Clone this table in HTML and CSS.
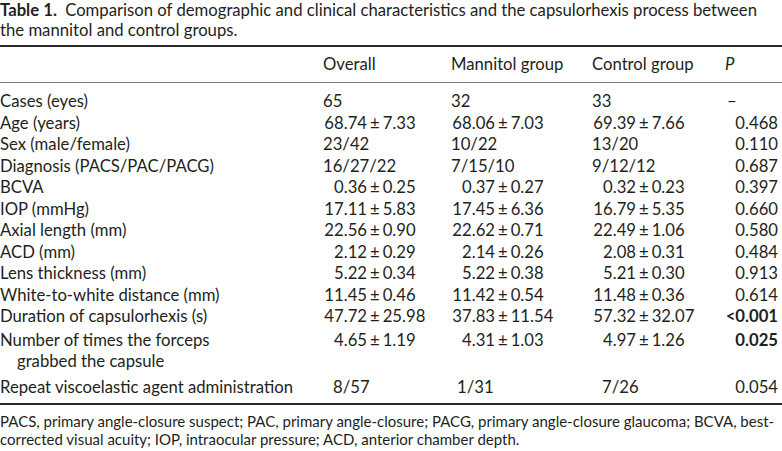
FILE: index.html
```html
<!DOCTYPE html>
<html>
<head>
<meta charset="utf-8">
<link rel="stylesheet" href="styles.css">
</head>
<body>
<div class="page">
  <p class="caption"><b class="lbl">Table 1.</b> Comparison of demographic and clinical characteristics and the capsulorhexis process between the mannitol and control groups.</p>
  <table class="tbl">
    <colgroup>
      <col class="c-label">
      <col class="c-all">
      <col class="c-man">
      <col class="c-con">
      <col class="c-p">
    </colgroup>
    <thead>
      <tr>
        <th></th>
        <th>Overall</th>
        <th>Mannitol group</th>
        <th>Control group</th>
        <th><i>P</i></th>
      </tr>
    </thead>
    <tbody>
      <tr class="first">
        <td>Cases (eyes)</td><td>65</td><td>32</td><td>33</td><td class="dash">–</td>
      </tr>
      <tr>
        <td>Age (years)</td>
        <td><span class="l">68.74</span><span class="pm">±</span><span class="r">7.33</span></td>
        <td><span class="l">68.06</span><span class="pm">±</span><span class="r">7.03</span></td>
        <td><span class="l">69.39</span><span class="pm">±</span><span class="r">7.66</span></td>
        <td class="p">0.468</td>
      </tr>
      <tr>
        <td>Sex (male/female)</td><td>23/42</td><td>10/22</td><td>13/20</td><td class="p">0.110</td>
      </tr>
      <tr>
        <td>Diagnosis (PACS/PAC/PACG)</td><td>16/27/22</td><td>7/15/10</td><td>9/12/12</td><td class="p">0.687</td>
      </tr>
      <tr>
        <td>BCVA</td>
        <td><span class="l">0.36</span><span class="pm">±</span><span class="r">0.25</span></td>
        <td><span class="l">0.37</span><span class="pm">±</span><span class="r">0.27</span></td>
        <td><span class="l">0.32</span><span class="pm">±</span><span class="r">0.23</span></td>
        <td class="p">0.397</td>
      </tr>
      <tr>
        <td>IOP (mmHg)</td>
        <td><span class="l">17.11</span><span class="pm">±</span><span class="r">5.83</span></td>
        <td><span class="l">17.45</span><span class="pm">±</span><span class="r">6.36</span></td>
        <td><span class="l">16.79</span><span class="pm">±</span><span class="r">5.35</span></td>
        <td class="p">0.660</td>
      </tr>
      <tr>
        <td>Axial length (mm)</td>
        <td><span class="l">22.56</span><span class="pm">±</span><span class="r">0.90</span></td>
        <td><span class="l">22.62</span><span class="pm">±</span><span class="r">0.71</span></td>
        <td><span class="l">22.49</span><span class="pm">±</span><span class="r">1.06</span></td>
        <td class="p">0.580</td>
      </tr>
      <tr>
        <td>ACD (mm)</td>
        <td><span class="l">2.12</span><span class="pm">±</span><span class="r">0.29</span></td>
        <td><span class="l">2.14</span><span class="pm">±</span><span class="r">0.26</span></td>
        <td><span class="l">2.08</span><span class="pm">±</span><span class="r">0.31</span></td>
        <td class="p">0.484</td>
      </tr>
      <tr>
        <td>Lens thickness (mm)</td>
        <td><span class="l">5.22</span><span class="pm">±</span><span class="r">0.34</span></td>
        <td><span class="l">5.22</span><span class="pm">±</span><span class="r">0.38</span></td>
        <td><span class="l">5.21</span><span class="pm">±</span><span class="r">0.30</span></td>
        <td class="p">0.913</td>
      </tr>
      <tr>
        <td>White-to-white distance (mm)</td>
        <td><span class="l">11.45</span><span class="pm">±</span><span class="r">0.46</span></td>
        <td><span class="l">11.42</span><span class="pm">±</span><span class="r">0.54</span></td>
        <td><span class="l">11.48</span><span class="pm">±</span><span class="r">0.36</span></td>
        <td class="p">0.614</td>
      </tr>
      <tr>
        <td>Duration of capsulorhexis (s)</td>
        <td><span class="l">47.72</span><span class="pm">±</span><span class="r">25.98</span></td>
        <td><span class="l">37.83</span><span class="pm">±</span><span class="r">11.54</span></td>
        <td><span class="l">57.32</span><span class="pm">±</span><span class="r">32.07</span></td>
        <td class="p"><b>&lt;0.001</b></td>
      </tr>
      <tr class="two">
        <td>Number of times the forceps<br><span class="indent">grabbed the capsule</span></td>
        <td><span class="l">4.65</span><span class="pm">±</span><span class="r">1.19</span></td>
        <td><span class="l">4.31</span><span class="pm">±</span><span class="r">1.03</span></td>
        <td><span class="l">4.97</span><span class="pm">±</span><span class="r">1.26</span></td>
        <td class="p"><b>0.025</b></td>
      </tr>
      <tr class="last">
        <td>Repeat viscoelastic agent administration</td>
        <td class="shift">8/57</td><td class="shift s2">1/31</td><td class="shift">7/26</td><td class="p">0.054</td>
      </tr>
    </tbody>
  </table>
  <p class="foot">PACS, primary angle-closure suspect; PAC, primary angle-closure; PACG, primary angle-closure glaucoma; BCVA, best-corrected visual acuity; IOP, intraocular pressure; ACD, anterior chamber depth.</p>
</div>
</body>
</html>
```

FILE: styles.css
```css
html, body {
  margin: 0;
  padding: 0;
  background: #ffffff;
}
body {
  font-family: Lato, "Liberation Sans", sans-serif;
  color: #231f20;
  font-size: 16.7px;
}
.page {
  width: 782px;
}
.caption {
  margin: 0;
  font-size: 16.7px;
  line-height: 20px;
}
.caption .lbl {
  font-weight: 700;
  margin-right: 4px;
}
.tbl {
  width: 782px;
  table-layout: fixed;
  border-collapse: collapse;
  margin-top: 5px;
  font-size: 16.7px;
}
.c-label { width: 323px; }
.c-all { width: 128px; }
.c-man { width: 141px; }
.c-con { width: 133px; }
.c-p { width: 57px; }
.tbl th {
  font-weight: 400;
  text-align: left;
  padding: 8px 0 8px 0;
  line-height: 19px;
  border-top: 2px solid #2b2b2b;
  border-bottom: 1px solid #7a7a7a;
  white-space: nowrap;
}
.tbl td {
  padding: 0;
  line-height: 21.5px;
  vertical-align: top;
  white-space: nowrap;
}
.tbl tr.first td {
  padding-top: 8px;
}
.tbl tr.two td {
  padding-top: 2px;
}
.tbl tr.last td {
  padding-top: 4px;
  padding-bottom: 5px;
  border-bottom: 2px solid #2b2b2b;
}
.tbl td.p {
  text-align: right;
  padding-right: 4px;
}
.tbl td.dash {
  text-align: left;
  padding-left: 2px;
}
.l {
  display: inline-block;
  width: 44px;
  text-align: right;
}
.pm {
  display: inline-block;
  padding: 0 3px;
}
.indent {
  padding-left: 17px;
}
.tbl tr.last td.shift {
  padding-left: 10px;
}
.tbl tr.last td.s2 {
  padding-left: 6px;
}
.foot {
  margin: 7px 0 0 0;
  font-size: 15px;
  line-height: 18px;
}
```
